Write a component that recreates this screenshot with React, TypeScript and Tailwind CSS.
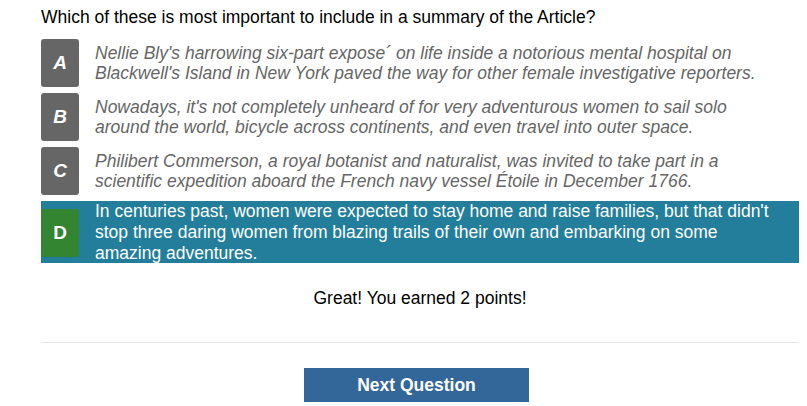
import React from 'react';

const OPTIONS = [
  {
    letter: 'A',
    text: "Nellie Bly's harrowing six-part expose\u00b4 on life inside a notorious mental hospital on Blackwell's Island in New York paved the way for other female investigative reporters.",
  },
  {
    letter: 'B',
    text: "Nowadays, it's not completely unheard of for very adventurous women to sail solo around the world, bicycle across continents, and even travel into outer space.",
  },
  {
    letter: 'C',
    text: 'Philibert Commerson, a royal botanist and naturalist, was invited to take part in a scientific expedition aboard the French navy vessel \u00c9toile in December 1766.',
  },
];

export default function App() {
  return (
    <div className="min-h-screen bg-white font-['Liberation_Sans',Arial,sans-serif] text-[17.5px] pl-[41px] pr-[8px]">
      {/* Question */}
      <div className="pt-[7px] leading-[20px] text-black mb-[12px]">
        Which of these is most important to include in a summary of the Article?
      </div>

      {/* Answer choices */}
      <div className="flex flex-col gap-[6px]">
        {OPTIONS.map((o) => (
          <div key={o.letter} className="flex items-center h-[48px] pr-[20px]">
            <div className="w-[38px] h-[48px] shrink-0 rounded-[3px] bg-[#666666] flex items-center justify-center text-white font-bold italic text-[19px]">
              {o.letter}
            </div>
            <p className="ml-[16px] italic text-[#666666] leading-[20px]">{o.text}</p>
          </div>
        ))}

        {/* Selected, correct */}
        <div className="flex items-center h-[62px] bg-[#227e9a] pr-[20px]">
          <div className="w-[38px] h-[48px] shrink-0 mt-[2px] rounded-[3px] bg-[#348531] flex items-center justify-center text-white font-bold text-[19px]">
            D
          </div>
          <p className="ml-[16px] text-white leading-[21px]">
            In centuries past, women were expected to stay home and raise families, but that didn't stop three daring women from blazing trails of their own and embarking on some amazing adventures.
          </p>
        </div>
      </div>

      {/* Feedback */}
      <div className="mt-[25px] text-center leading-[20px] text-black">Great! You earned 2 points!</div>

      <div className="mt-[34px] border-t border-[#e6e6e6]" />

      <div className="flex justify-center pr-[7px] mt-[25px]">
        <button className="w-[225px] h-[34px] bg-[#336699] text-white font-bold text-[17.5px]">
          Next Question
        </button>
      </div>
    </div>
  );
}
